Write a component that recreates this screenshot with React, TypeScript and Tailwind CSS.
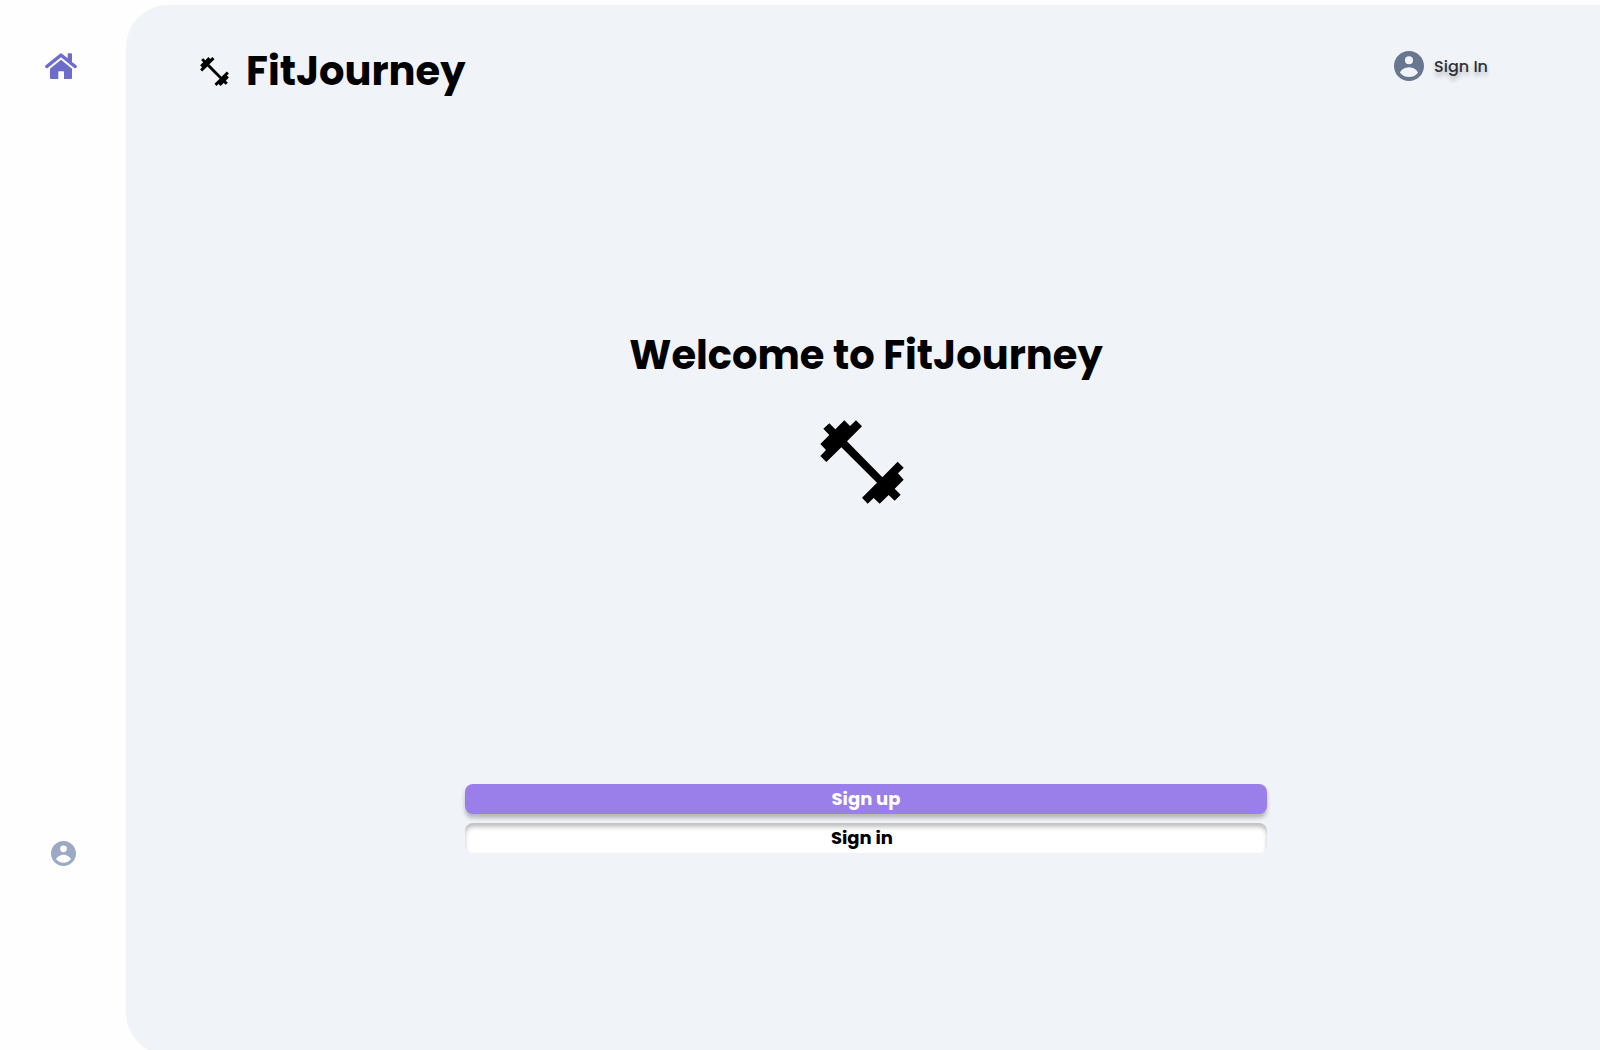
type IconProps = { className?: string };

function Dumbbell({ className }: IconProps) {
  return (
    <svg viewBox="60 60 252 252" className={className} fill="currentColor" aria-hidden="true">
      <path d="M70 86 88 70 106 88 133 61 150 78 168 61 186 79 141 124 247 232 293 185 311 203 294 220 311 239 284 266 302 284 284 302 266 285 239 311 221 294 203 311 186 293 231 248 124 142 79 186 61 168 78 150 61 132 88 105Z" />
    </svg>
  );
}

function House({ className }: IconProps) {
  return (
    <svg viewBox="0 0 96 78" className={className} fill="currentColor" aria-hidden="true">
      <path d="M45 2Q48 0 51 2L68 16V4Q68 1 71 1H78Q81 1 81 4V27L94 37Q97 40 95 43L93 45Q91 47 88 45L48 13 8 45Q5 47 3 45L1 43Q-1 40 2 37Z" />
      <path d="M48 20 81 47V75Q81 78 78 78H57V57Q57 55 55 55H42Q40 55 40 57V78H18Q15 78 15 75V47Z" />
    </svg>
  );
}

function Account({ className }: IconProps) {
  return (
    <svg viewBox="2 2 20 20" className={className} fill="currentColor" aria-hidden="true">
      <path d="M12 2C6.48 2 2 6.48 2 12s4.48 10 10 10 10-4.48 10-10S17.52 2 12 2zm0 3.5a2.7 2.7 0 1 1 0 5.4 2.7 2.7 0 0 1 0-5.4zm0 13.9c-2.5 0-4.71-1.18-6-2.92.6-1.6 3-3.58 6-3.58s5.4 1.98 6 3.58c-1.29 1.74-3.5 2.92-6 2.92z" />
    </svg>
  );
}

export default function App() {
  return (
    <div className="flex h-screen overflow-hidden bg-[#fefefe] font-['Poppins','Inter',sans-serif] text-black">
      <nav aria-label="Main" className="flex w-[126px] shrink-0 flex-col items-center justify-between pt-[53px] pb-[184px]">
        <a href="#home" aria-label="Home" className="mr-1 text-[#6c6ccb]">
          <House className="h-[26px] w-8" />
        </a>
        <a href="#account" aria-label="Account" className="text-[#9ca9c4]">
          <Account className="size-[25px]" />
        </a>
      </nav>
      <main className="mt-[5px] flex h-screen min-w-0 grow flex-col rounded-l-[42px] bg-[#f0f3f8]">
        <header className="flex items-start justify-between pt-9 pr-28 pl-[74px]">
          <a href="#home" className="flex items-center gap-[17px]">
            <Dumbbell className="size-[29px]" />
            <span className="text-[40px] leading-[60px] font-bold">FitJourney</span>
          </a>
          <a href="#sign-in" className="mt-2.5 flex items-center gap-2.5">
            <Account className="size-[30px] text-[#68768f]" />
            <span className="pt-0.5 text-base leading-6 font-medium text-[#2d3035] text-shadow-[0_4px_4px_rgb(0_0_0/0.25)]">Sign In</span>
          </a>
        </header>
        <section className="flex flex-col items-center pt-56 pl-1.5">
          <h1 className="text-[40px] leading-[60px] font-bold">Welcome to FitJourney</h1>
          <Dumbbell className="mt-[35px] mr-2 size-[84px]" />
          <div className="mt-[280px] flex w-[54.6%] flex-col gap-[9px] text-lg leading-[30px] font-bold">
            <button type="button" className="h-[30px] rounded-lg bg-[#9a7eea] text-white shadow-[0_4px_4px_rgb(0_0_0/0.25)]">
              Sign up
            </button>
            <button type="button" className="h-[30px] rounded-lg bg-white pr-2 shadow-[inset_0_4px_4px_rgb(0_0_0/0.25)]">
              Sign in
            </button>
          </div>
        </section>
      </main>
    </div>
  );
}
